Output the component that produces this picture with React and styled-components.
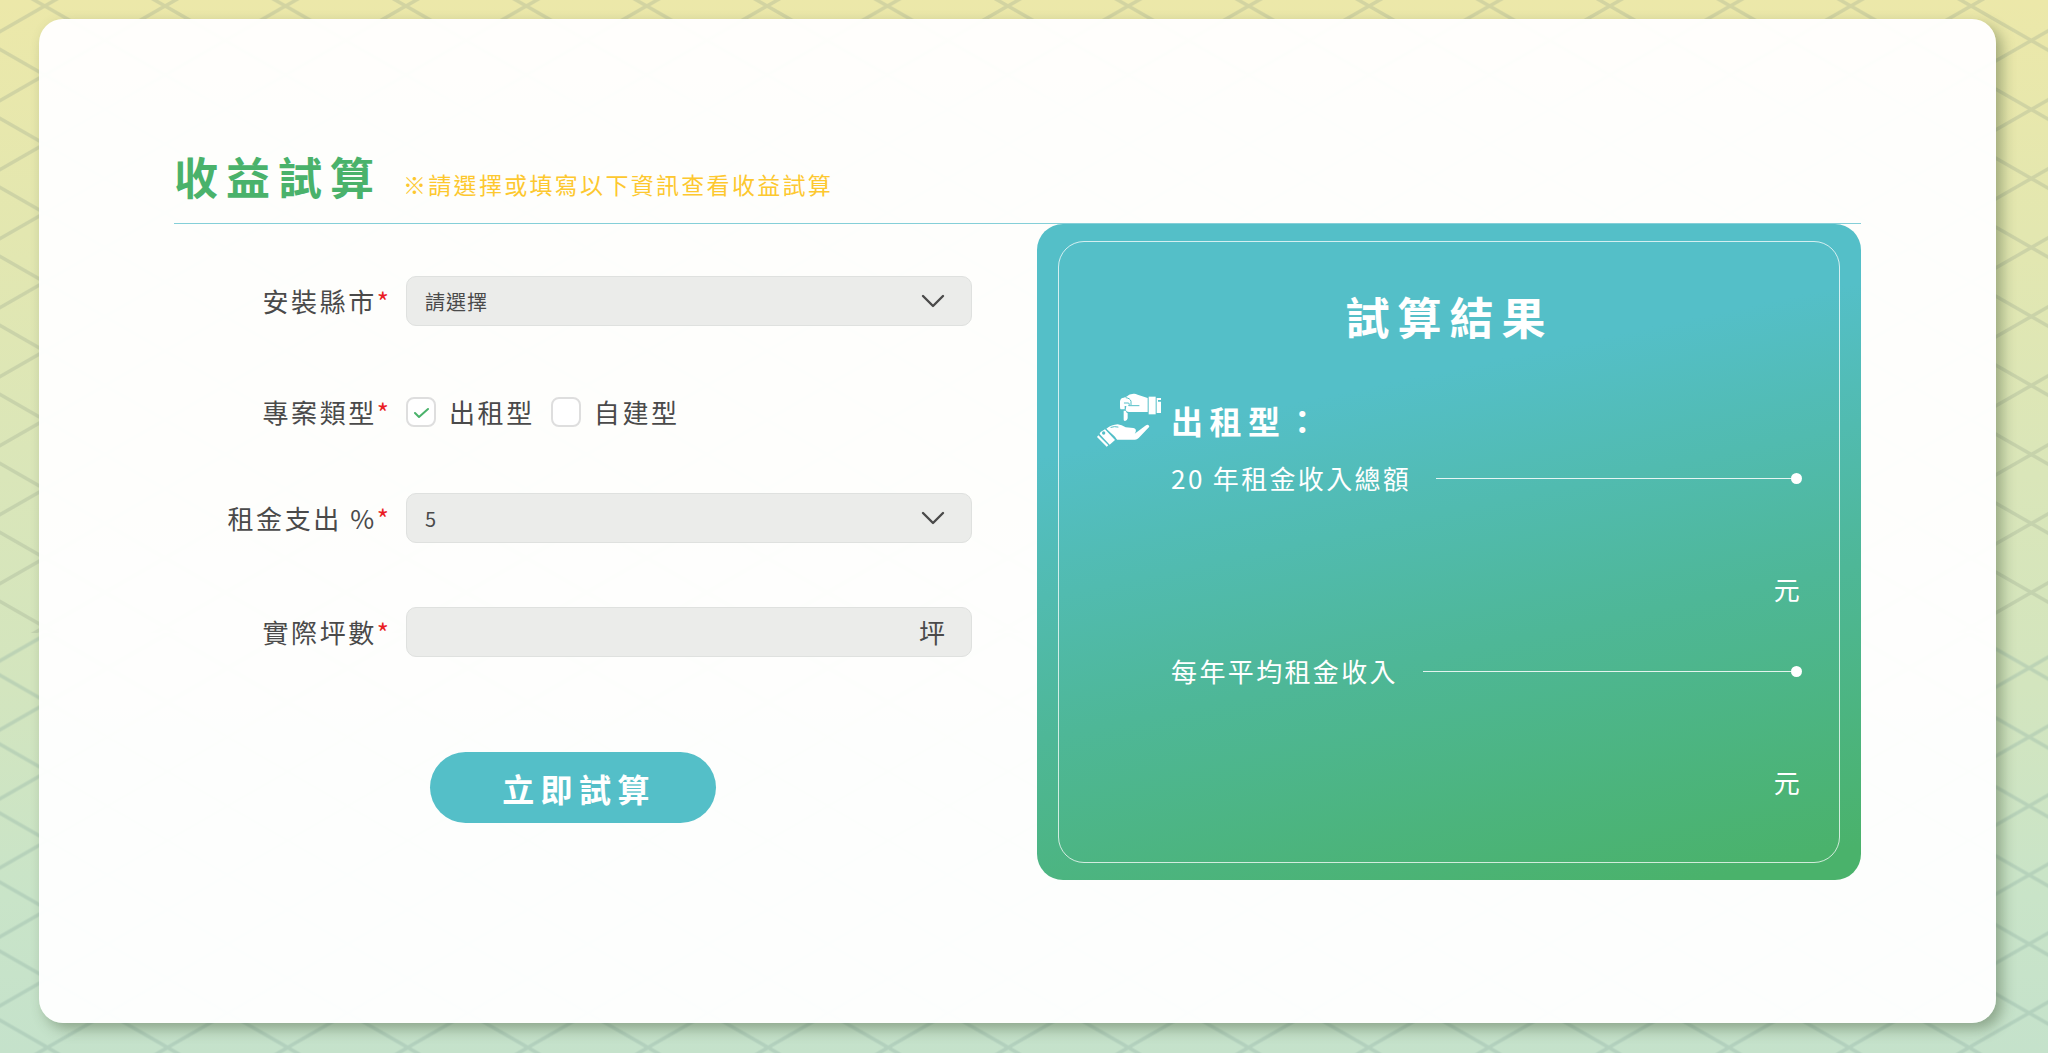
import React, { useState } from "react";
import styled, { createGlobalStyle } from "styled-components";

const teal = "#54bfc8";
const green = "#4ab26b";
const ink = "#4a4a4a";

const GlobalStyle = createGlobalStyle`
  *, *::before, *::after { box-sizing: border-box; }
  body {
    margin: 0;
    color: ${ink};
    font-family: "Noto Sans CJK TC", "Noto Sans", sans-serif;
  }
  button, input, select { font-family: inherit; color: inherit; }
`;

const Page = styled.main`
  position: relative;
  isolation: isolate;
  min-height: 100vh;
  padding: 19px 52px 30px 39px;
  display: flex;
  background: linear-gradient(180deg, #ece8a9 0%, #e3e7b0 22%, #dae6b9 45%, #d3e5be 65%, #c9e4c8 85%, #c5e2cb 100%);
`;

const Lattice = styled.svg`
  position: absolute;
  inset: 0;
  z-index: -1;
  width: 100%;
  height: 100%;
`;

const Card = styled.section`
  flex: 1;
  padding: 123px 135px 142px;
  border-radius: 24px;
  background: rgba(255, 255, 255, 0.96);
  box-shadow: 6px 6px 14px rgba(60, 80, 50, 0.42);
`;

const Header = styled.header`
  display: flex;
  align-items: center;
  gap: 21px;
  height: 82px;
  padding-bottom: 13px;
  border-bottom: 1px solid #84cfd8;
`;

const Title = styled.h1`
  margin: 0;
  color: ${green};
  font-size: 44px;
  line-height: 64px;
  letter-spacing: 8px;
`;

const Note = styled.p`
  margin: 16px 0 0;
  color: #fdc82f;
  font-size: 23px;
  line-height: 32px;
  letter-spacing: 0.1em;
`;

const Columns = styled.div`
  display: grid;
  grid-template-columns: 22fr 21fr;
`;

const Form = styled.form`
  display: grid;
  grid-template-columns: 215px 1fr;
  grid-template-rows: 50px 55px 50px 58px auto;
  column-gap: 17px;
  row-gap: 56px;
  align-content: start;
  align-items: end;
  padding: 52px 65px 0 0;
`;

const Label = styled.label`
  justify-self: end;
  font-size: 26px;
  line-height: 50px;
  letter-spacing: 0.1em;
  white-space: nowrap;
`;

const Star = styled.span`
  color: #ea1c24;
  letter-spacing: 0;
`;

const Field = styled.div`
  display: grid;
  align-items: center;
  > * { grid-area: 1 / 1; }
`;

const control = `
  width: 100%;
  height: 50px;
  padding: 0 18px;
  border: 1px solid #dfe1df;
  border-radius: 10px;
  background: #ebecea;
  font-size: 20px;
  letter-spacing: 1px;
`;

const Select = styled.select`
  ${control}
  appearance: none;
`;

const TextInput = styled.input`
  ${control}
  padding-right: 64px;
`;

const Adornment = styled.span`
  justify-self: end;
  margin-right: 27px;
  display: flex;
  font-size: 26px;
  line-height: 40px;
  pointer-events: none;
`;

const Choices = styled.div`
  display: flex;
  align-items: center;
  gap: 16px;
  height: 50px;
`;

const Choice = styled.label`
  display: flex;
  align-items: center;
  gap: 13px;
  font-size: 26px;
  line-height: 40px;
  letter-spacing: 0.1em;
`;

const Tick = styled.span`
  display: grid;
  place-items: center;
  > * { grid-area: 1 / 1; }
  > svg { pointer-events: none; }
`;

const Checkbox = styled.input`
  appearance: none;
  width: 30px;
  height: 30px;
  margin: 0;
  border: 2px solid #dedede;
  border-radius: 8px;
  background: #fff;
`;

const Submit = styled.button`
  grid-column: 2;
  justify-self: start;
  width: 286px;
  height: 71px;
  margin: 39px 0 0 24px;
  padding: 0 0 0 12px;
  border: 0;
  border-radius: 36px;
  background: ${teal};
  color: #fff;
  font-size: 32px;
  font-weight: 700;
  letter-spacing: 0.2em;
`;

const Result = styled.aside`
  padding: 17px 21px;
  border-radius: 26px;
  background: linear-gradient(168deg, ${teal} 28%, #4eb797 62%, ${green} 96%);
  color: #fff;
`;

const ResultFrame = styled.div`
  height: 100%;
  padding: 42px 37px 60px 38px;
  border: 1px solid rgba(255, 255, 255, 0.75);
  border-radius: 26px;
`;

const ResultTitle = styled.h2`
  margin: 0;
  font-size: 44px;
  line-height: 64px;
  letter-spacing: 8px;
  text-align: center;
`;

const Plan = styled.div`
  display: flex;
  align-items: center;
  gap: 10px;
  margin-top: 44px;
`;

const PlanName = styled.h3`
  margin: 0;
  font-size: 32px;
  line-height: 56px;
  letter-spacing: 0.2em;
`;

const Figures = styled.dl`
  display: grid;
  gap: 42px;
  margin: 10px 0 0;
  padding-left: 74px;
`;

const Figure = styled.div`
  font-size: 26px;
  line-height: 40px;
  letter-spacing: 0.09em;
`;

const FigureName = styled.dt`
  display: flex;
  align-items: center;

  &::after {
    content: "";
    width: 11px;
    height: 11px;
    border-radius: 50%;
    background: #fff;
  }
`;

const Rule = styled.span`
  flex: 1;
  height: 1px;
  margin-left: 25px;
  background: rgba(255, 255, 255, 0.85);
`;

const FigureValue = styled.dd`
  display: flex;
  justify-content: flex-end;
  margin: 71px 0 0;
`;

function Background() {
  const lines = "M-60.2 -34.5L180.6 103.5M-60.2 34.5L60.2 103.5M60.2 -34.5L180.6 34.5M-60.2 34.5L60.2 -34.5M-60.2 103.5L180.6 -34.5M60.2 103.5L180.6 34.5";
  return (
    <Lattice aria-hidden="true">
      <defs>
        <pattern id="upper" width="120.4" height="69" x="44.7" y="6" patternUnits="userSpaceOnUse">
          <path d={lines} stroke="#98a590" strokeOpacity="0.3" strokeWidth="3.6" fill="none" />
        </pattern>
        <pattern id="lower" width="120.1" height="69" x="47.3" y="12.5" patternUnits="userSpaceOnUse">
          <path d={lines} stroke="#8fafa5" strokeOpacity="0.34" strokeWidth="3.6" fill="none" />
        </pattern>
      </defs>
      <rect width="100%" height="633" fill="url(#upper)" />
      <rect y="633" width="100%" height="100%" fill="url(#lower)" />
    </Lattice>
  );
}

function Chevron() {
  return (
    <svg width="24" height="14" viewBox="0 0 24 14" aria-hidden="true">
      <path d="M2 2L12 12L22 2" fill="none" stroke={ink} strokeWidth="2.4" strokeLinecap="round" strokeLinejoin="round" />
    </svg>
  );
}

function HandsIcon() {
  return (
    <svg width="64" height="54" viewBox="36 27 192 162" aria-hidden="true">
      <g fill="#fff">
        <path d="M124 38Q134 28 148 29Q152 29 158 32L188 42V84H132Q124 84 122 78L124 66H119V76H107Q105 74 105 68V52Q106 42 116 41Z" />
        <path d="M116 80H122Q124 87 128 88V103Q126 112 119 111Q115 110 116 105Z" />
        <path d="M191 38H212V91H191Z" />
        <path d="M215 42H228V48H219V53H228V87H215Z" />
        <path d="M64 134Q80 122 98 121Q110 122 122 130L145 132Q155 134 152 144L149 149L181 125Q191 119 193 128L161 162Q156 167 150 167H96L90 158Z" />
        <path d="M60 136L90 168L74 182L44 150Q44 146 48 143Z" />
        <path d="M40 154L70 184L65 188L36 159Z" />
      </g>
      <g fill="none" stroke={teal} strokeWidth="3" strokeLinecap="round">
        <path d="M123 41Q136 43 138 52V62" />
        <path d="M118 57H131Q135 60 131 65H162" />
        <path d="M78 130Q88 126 99 129" />
        <path d="M63 135L93 167" />
      </g>
      <circle cx="56" cy="147" r="5" fill={teal} />
    </svg>
  );
}

function Required() {
  return <Star>*</Star>;
}

function FigureItem({ name }) {
  return (
    <Figure>
      <FigureName>
        {name}
        <Rule />
      </FigureName>
      <FigureValue>元</FigureValue>
    </Figure>
  );
}

function PlanChoice({ name, checked, onSelect }) {
  return (
    <Choice>
      <Tick>
        <Checkbox type="checkbox" checked={checked} onChange={onSelect} />
        {checked && (
          <svg width="16" height="14" viewBox="0 0 16 14" aria-hidden="true">
            <path d="M2 8L6 12L15 4" fill="none" stroke={green} strokeWidth="2" strokeLinecap="round" strokeLinejoin="round" />
          </svg>
        )}
      </Tick>
      {name}
    </Choice>
  );
}

export default function App() {
  const [plan, setPlan] = useState("出租型");

  return (
    <>
      <GlobalStyle />
      <Page>
        <Background />
        <Card>
          <Header>
            <Title>收益試算</Title>
            <Note>※請選擇或填寫以下資訊查看收益試算</Note>
          </Header>
          <Columns>
            <Form onSubmit={(event) => event.preventDefault()}>
              <Label htmlFor="city">安裝縣市<Required /></Label>
              <Field>
                <Select id="city" defaultValue="">
                  <option value="">請選擇</option>
                </Select>
                <Adornment><Chevron /></Adornment>
              </Field>

              <Label as="span" id="plan-label">專案類型<Required /></Label>
              <Choices role="group" aria-labelledby="plan-label">
                {["出租型", "自建型"].map((name) => (
                  <PlanChoice key={name} name={name} checked={plan === name} onSelect={() => setPlan(name)} />
                ))}
              </Choices>

              <Label htmlFor="rent">租金支出 %<Required /></Label>
              <Field>
                <Select id="rent" defaultValue="5">
                  <option value="5">5</option>
                </Select>
                <Adornment><Chevron /></Adornment>
              </Field>

              <Label htmlFor="area">實際坪數<Required /></Label>
              <Field>
                <TextInput id="area" type="text" inputMode="decimal" />
                <Adornment>坪</Adornment>
              </Field>

              <Submit type="submit">立即試算</Submit>
            </Form>

            <Result>
              <ResultFrame>
                <ResultTitle>試算結果</ResultTitle>
                <Plan>
                  <HandsIcon />
                  <PlanName>{plan}：</PlanName>
                </Plan>
                <Figures>
                  <FigureItem name="20 年租金收入總額" />
                  <FigureItem name="每年平均租金收入" />
                </Figures>
              </ResultFrame>
            </Result>
          </Columns>
        </Card>
      </Page>
    </>
  );
}
